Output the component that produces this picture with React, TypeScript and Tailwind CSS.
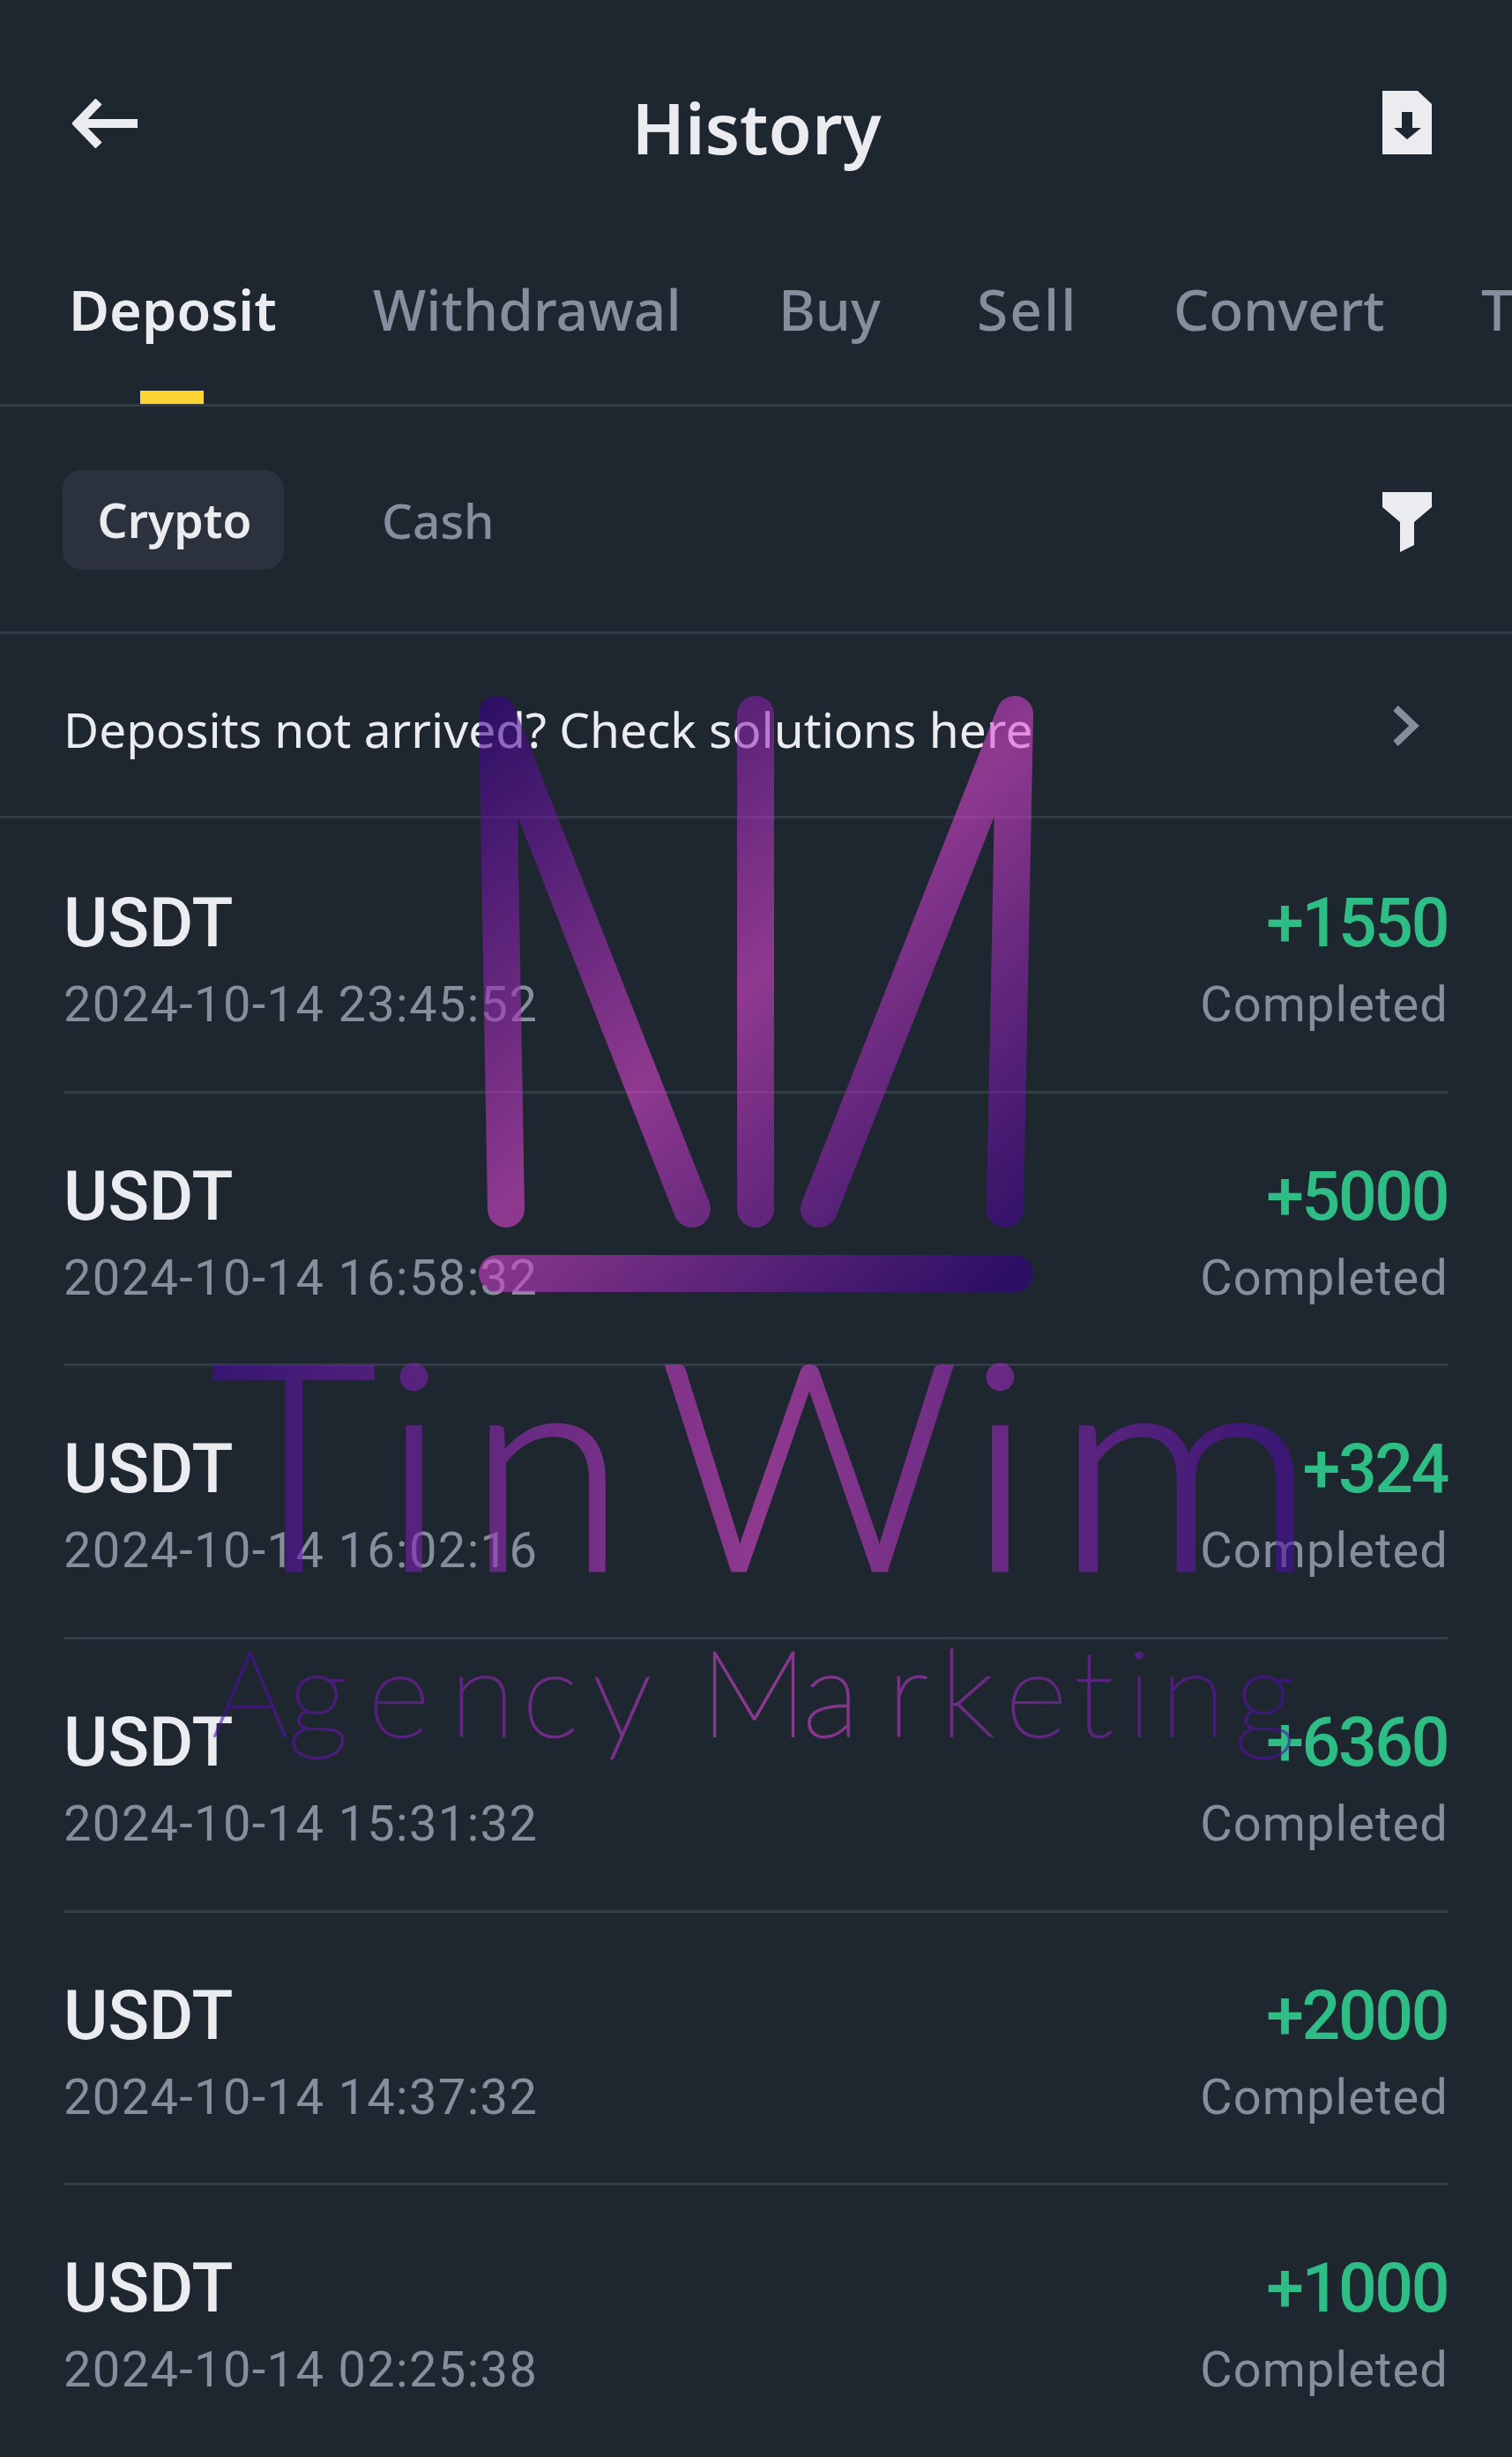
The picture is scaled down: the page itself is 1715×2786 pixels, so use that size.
const tabs = [
  { label: 'Withdrawal', className: 'ml-[110px] w-[350px]' },
  { label: 'Buy', className: 'ml-[110px] w-[115px]' },
  { label: 'Sell', className: 'ml-[110px] w-[113px] tracking-[2px]' },
  { label: 'Convert', className: 'ml-[110px] w-[240px] tracking-[-0.4px]' },
  { label: 'Transfer', className: 'ml-[109px]' },
];

const deposits = [
  { amount: '+1550', time: '2024-10-14 23:45:52' },
  { amount: '+5000', time: '2024-10-14 16:58:32' },
  { amount: '+324', time: '2024-10-14 16:02:16' },
  { amount: '+6360', time: '2024-10-14 15:31:32' },
  { amount: '+2000', time: '2024-10-14 14:37:32' },
  { amount: '+1000', time: '2024-10-14 02:25:38' },
];

const Watermark = () => (
  <svg className="absolute top-0 left-0 pointer-events-none opacity-[0.57]" width="1715" height="2786" viewBox="0 0 1715 2786" fill="none">
    <defs>
      <linearGradient id="crown" gradientUnits="userSpaceOnUse" x1="564" y1="790" x2="1151" y2="1430">
        <stop offset="0" stopColor="#3a008f" />
        <stop offset="0.5" stopColor="#e449d7" />
        <stop offset="1" stopColor="#3a008f" />
      </linearGradient>
      <linearGradient id="word" gradientUnits="userSpaceOnUse" x1="245" y1="0" x2="1480" y2="0">
        <stop offset="0" stopColor="#4a0aa6" />
        <stop offset="0.5" stopColor="#e449d7" />
        <stop offset="1" stopColor="#4a0aa6" />
      </linearGradient>
    </defs>
    <g stroke="url(#crown)" strokeWidth="42" strokeLinecap="round">
      <path d="M564 810 L574 1371 M564 810 L785 1371 M857 810 L857 1371 M1151 810 L929 1371 M1151 810 L1140 1371 M564 1444 L1151 1444" />
    </g>
    <text fontFamily="Lato, sans-serif" fontWeight="300" fontSize="328" fill="url(#word)" stroke="url(#word)" strokeWidth="3" y="1781" xmlSpace="preserve">
      <tspan x="238">T</tspan>
      <tspan x="433">i</tspan>
      <tspan x="530">{'n '}</tspan>
      <tspan x="748" textLength="340" lengthAdjust="spacingAndGlyphs">W</tspan>
      <tspan x="1098">i</tspan>
      <tspan x="1195" textLength="300" lengthAdjust="spacingAndGlyphs">m</tspan>
    </text>
    <text fontFamily="Lato, sans-serif" fontWeight="100" fontSize="137" fill="url(#word)" stroke="url(#word)" strokeWidth="2" y="1969" x="240 326 417 510 592 672 0 794 910 1006 1066 1140 1218 1278 1316 1400">
      Agency Marketing
    </text>
  </svg>
);

const App = () => {
  return (
    <div className="relative w-[1715px] h-[2786px] overflow-hidden bg-[#1e2630] text-[#eaecef] font-['Noto_Sans',sans-serif]">
      {/* Header */}
      <header className="h-[271px] px-[82px] pt-[92px] flex justify-between items-start">
        <svg width="74" height="56" viewBox="0 0 74 56" className="mt-5" fill="none" stroke="#eaecef" strokeWidth="10">
          <path d="M30 3 L6 28 L30 53 M8 28 H74" />
        </svg>
        <h1 className="text-[80px] leading-[108px] font-semibold -mt-[2px] -ml-[8px]">History</h1>
        <svg width="56" height="72" viewBox="0 0 56 72" className="mt-[11px] mr-[9px]">
          <path d="M0 0 H40 L56 15 V72 H0 Z" fill="#eaecef" />
          <path d="M22 24 H34 V42 H44 L28 55 L13 42 H22 Z" fill="#1e2630" />
        </svg>
      </header>

      {/* Tabs */}
      <nav className="h-[190px] border-b-[3px] border-[#343b47] flex items-start pl-[78px] whitespace-nowrap overflow-hidden">
        <div className="relative h-full shrink-0 w-[235px] pt-[38px]">
          <span className="block text-[63px] leading-[84px] font-semibold">Deposit</span>
          <div className="absolute bottom-0 left-[81px] w-[72px] h-[15px] bg-[#fcd535]" />
        </div>
        {tabs.map((tab) => (
          <span key={tab.label} className={`shrink-0 pt-[38px] text-[64px] leading-[84px] font-medium text-[#848e9c] ${tab.className}`}>{tab.label}</span>
        ))}
      </nav>

      {/* Crypto / Cash filter */}
      <div className="h-[258px] border-b-[3px] border-[#343b47] pl-[71px] pr-[91px] pt-[2px] flex items-center justify-between">
        <div className="flex items-center gap-[111px]">
          <div className="w-[251px] h-[113px] rounded-[22px] bg-[#2b323d] flex items-center justify-center text-[53.5px] font-semibold pt-[2px] pl-[3px]">Crypto</div>
          <span className="text-[55px] font-medium text-[#848e9c] pt-[2px]">Cash</span>
        </div>
        <svg width="56" height="68" viewBox="0 0 56 68" className="mt-[4px]">
          <path d="M0 0 H56 V17 L36 34 V60 L20 68 V34 L0 17 Z" fill="#eaecef" />
        </svg>
      </div>

      {/* Notice */}
      <div className="h-[209px] border-b-[3px] border-[#343b47] pl-[72px] pr-[105px] flex items-center justify-between">
        <span className="text-[55px] mt-[10px] text-[#eaecef] whitespace-nowrap">Deposits not arrived? Check solutions here</span>
        <svg width="32" height="48" viewBox="0 0 32 48" fill="none" stroke="#848e9c" strokeWidth="8" className="mt-[1px]">
          <path d="M5 4 L26 24 L5 44" />
        </svg>
      </div>

      {/* Rows */}
      <div className="mx-[72px] pt-[2px] font-['Roboto',sans-serif]">
        {deposits.map((row) => (
          <div key={row.time} className="h-[309.7px] border-b-[3px] border-[#343b47] last:border-b-0 pt-[75px] flex justify-between items-start">
            <div>
              <div className="text-[77px] leading-[84px] font-medium">USDT</div>
              <div className="mt-[14px] text-[56px] leading-[72px] tracking-[1.35px] text-[#848e9c]">{row.time}</div>
            </div>
            <div className="text-right">
              <div className="text-[77px] leading-[84px] font-medium tracking-[-2.4px] mr-[1px] text-[#2ebd85]">{row.amount}</div>
              <div className="mt-[14px] text-[56px] leading-[72px] tracking-[1.1px] text-[#848e9c]">Completed</div>
            </div>
          </div>
        ))}
      </div>

      <Watermark />
    </div>
  );
};

export default App;
